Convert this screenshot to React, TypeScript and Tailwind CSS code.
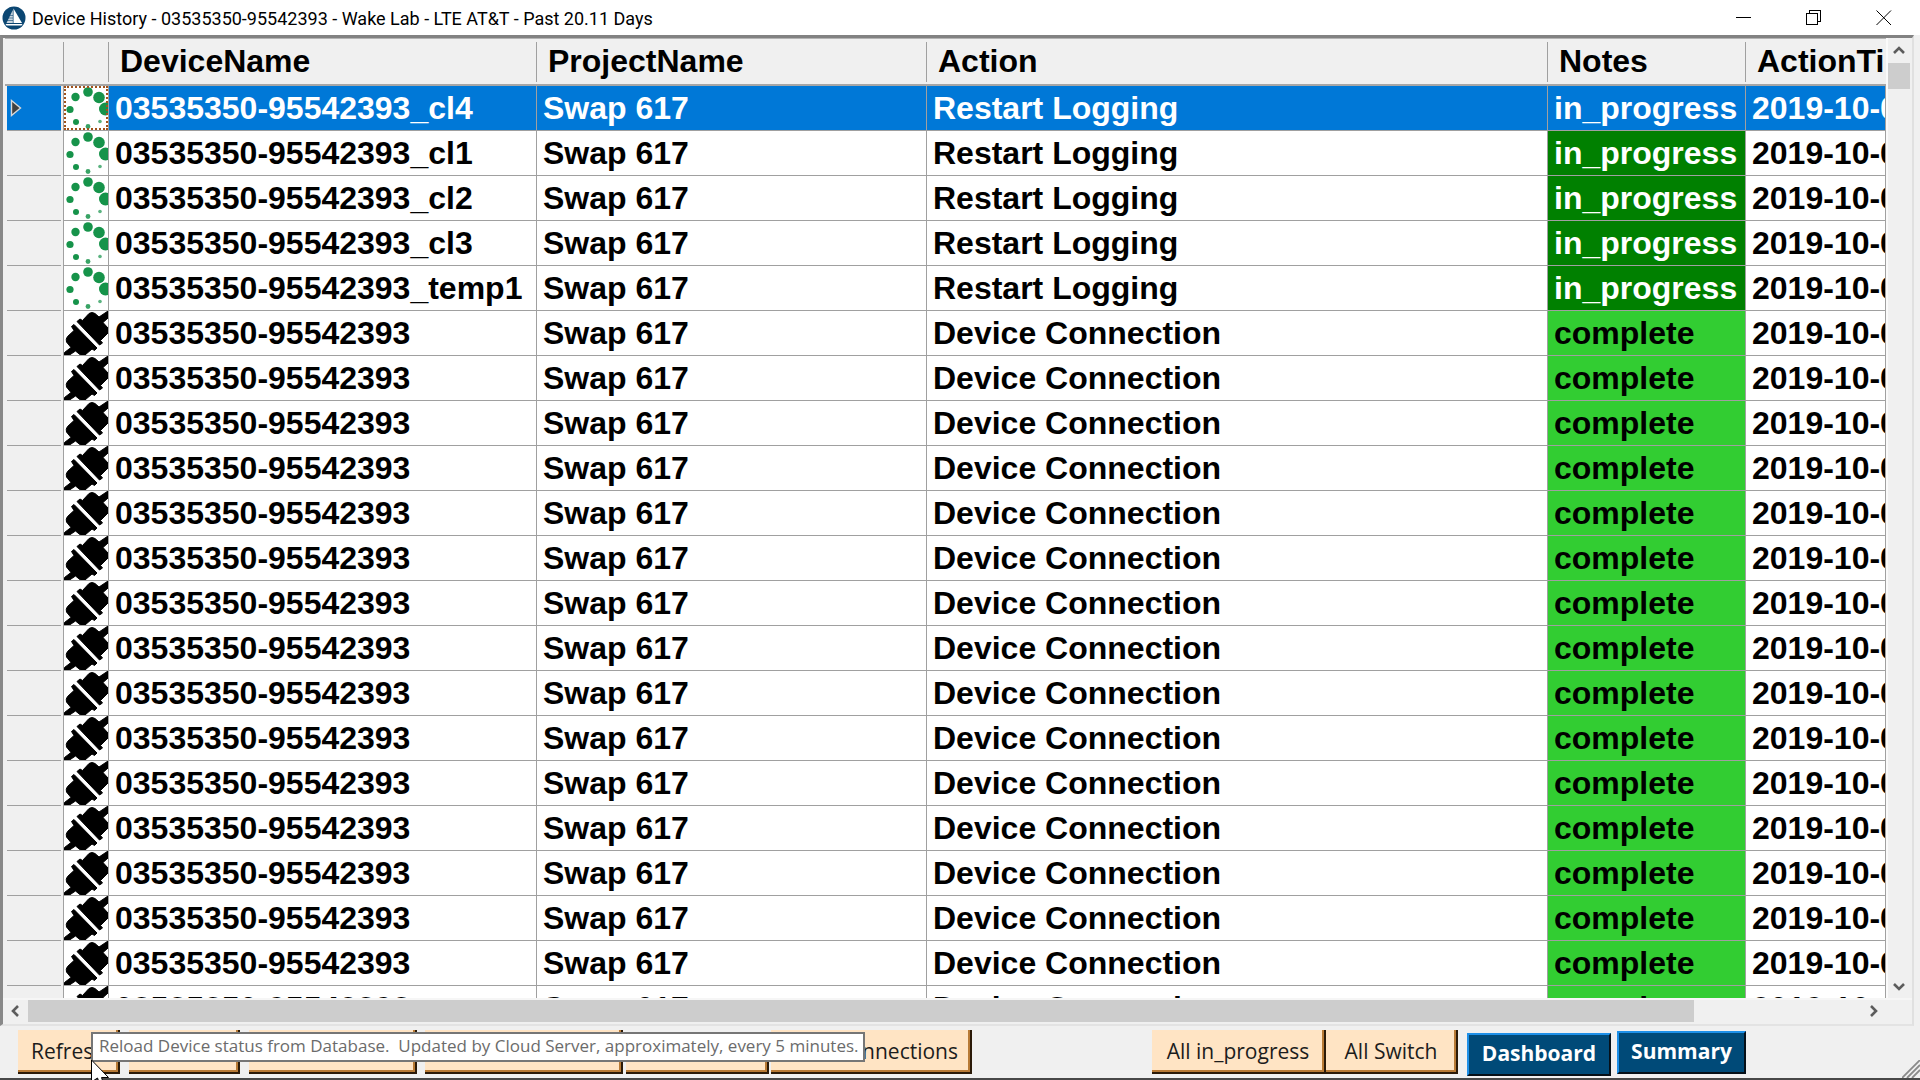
import React from 'react';

type RowData = {
  icon: 'busy' | 'plug';
  device: string;
  project: string;
  action: string;
  notes: 'in_progress' | 'complete';
  time: string;
};

const busyRows: RowData[] = ['cl4', 'cl1', 'cl2', 'cl3', 'temp1'].map((s) => ({
  icon: 'busy',
  device: `03535350-95542393_${s}`,
  project: 'Swap 617',
  action: 'Restart Logging',
  notes: 'in_progress',
  time: '2019-10-07',
}));

const doneRows: RowData[] = Array.from({ length: 16 }, () => ({
  icon: 'plug',
  device: '03535350-95542393',
  project: 'Swap 617',
  action: 'Device Connection',
  notes: 'complete',
  time: '2019-10-07',
}));

const rows = [...busyRows, ...doneRows];

function BusyIcon() {
  return (
    <svg viewBox="0 0 44 44" className="block size-11" fill="#16934a" aria-hidden="true">
      <circle cx="24" cy="6" r="4.8" />
      <circle cx="11.5" cy="11" r="4.2" />
      <circle cx="35" cy="11.5" r="5.8" />
      <circle cx="6" cy="23.5" r="3.6" />
      <circle cx="41.5" cy="23" r="6.5" />
      <circle cx="12" cy="36" r="3" />
      <circle cx="36" cy="35.5" r="1.8" opacity="0.7" />
      <circle cx="24" cy="40.5" r="2.4" opacity="0.85" />
    </svg>
  );
}

function PlugIcon() {
  return (
    <svg viewBox="0 0 44 44" className="block size-11" fill="#000" stroke="#000" strokeWidth="1" strokeLinejoin="round" aria-hidden="true">
      <path d="M13 10.5 L16 8 L18.5 9.5 L25 2.5 Q28 0.5 31 2.5 L35 6 L44 0 L44 7 L39 11.5 L44 17 L44 22 L36.5 29.5 L38.5 32 L35.5 34 Z" />
      <path d="M7.5 15.5 L10 13.5 L33 37 L30.5 39.5 L28 38 L21 44 L16.5 44 L11.5 40 L5.5 44 L0.5 44 L0.5 41.5 L7 36.5 L2.5 31 Q1.5 28 3.5 25.5 L10 19.5 Z" />
    </svg>
  );
}

function HeaderCell({ children, last = false }: { children?: React.ReactNode; last?: boolean }) {
  return (
    <th scope="col" className="h-[47px] overflow-hidden border-b-2 border-[#a6a6a6] p-0 text-left font-bold">
      <div className={last ? 'h-10 pl-[11px] leading-[38px]' : 'h-10 border-r border-[#a0a0a0] pl-[11px] leading-[38px]'}>{children}</div>
    </th>
  );
}

function Row({ row, selected }: { row: RowData; selected: boolean }) {
  const cell = 'h-[45px] overflow-hidden border-r border-b border-[#a0a0a0] py-0 pr-0 pl-1.5 leading-8';
  const note = selected ? '' : row.notes === 'in_progress' ? ' bg-[#008000] text-white' : ' bg-[#32cd32]';
  return (
    <tr className={selected ? 'bg-[#0078d7] text-white' : 'bg-white text-black'}>
      <th scope="row" aria-label={row.device} className="h-[45px] border-r border-[#a0a0a0] bg-[#f0f0f0] py-0 pr-0.5 pl-0.5">
        <div className={selected ? 'flex h-[45px] items-center border-b border-[#a0a0a0] bg-[#0078d7]' : 'h-[45px] border-b border-[#a0a0a0]'}>
          {selected && (
            <svg viewBox="0 0 12 18" className="ml-[3px] h-[18px] w-3" aria-hidden="true">
              <path d="M1.5 1.5 L10.5 9 L1.5 16.5 Z" fill="#404040" stroke="#d8d8d8" strokeWidth="1.4" />
            </svg>
          )}
        </div>
      </th>
      <td className="h-[45px] overflow-hidden border-r border-b border-[#a0a0a0] bg-white p-0">
        <div className={selected ? 'size-11 outline-2 -outline-offset-2 outline-dotted outline-[#a0521c]' : 'size-11'}>
          {row.icon === 'busy' ? <BusyIcon /> : <PlugIcon />}
        </div>
      </td>
      <td className={cell}>{row.device}</td>
      <td className={cell}>{row.project}</td>
      <td className={cell}>{row.action}</td>
      <td className={cell + note}>{row.notes}</td>
      <td className={cell}>{row.time}</td>
    </tr>
  );
}

function Chevron({ dir }: { dir: 'up' | 'down' | 'left' | 'right' }) {
  const d = {
    up: 'M2 9 L7 4 L12 9',
    down: 'M2 5 L7 10 L12 5',
    left: 'M9 2 L4 7 L9 12',
    right: 'M5 2 L10 7 L5 12',
  }[dir];
  return (
    <svg viewBox="0 0 14 14" className="size-3.5" fill="none" stroke="#5c5c5c" strokeWidth="2.6" aria-hidden="true">
      <path d={d} />
    </svg>
  );
}

function PeachButton({ className, label, children }: { className: string; label?: string; children?: React.ReactNode }) {
  return (
    <button
      type="button"
      aria-label={label}
      className={
        'shrink-0 overflow-hidden border-r-2 border-b-2 border-[#2b1a08] bg-[#ffe4c4] text-[21px] leading-10 whitespace-nowrap text-[#1c1c1c] shadow-[inset_-2px_-2px_0_#b87a35] ' +
        className
      }
    >
      {children}
    </button>
  );
}

function BlueButton({ className, children }: { className: string; children: React.ReactNode }) {
  return (
    <button
      type="button"
      className={
        'h-[43px] shrink-0 border-2 border-t-[#1e90e8] border-r-[#061018] border-b-[#061018] border-l-[#1e90e8] bg-[#004a78] pb-1 text-[21px] leading-8 font-bold text-white ' +
        className
      }
    >
      {children}
    </button>
  );
}

export default function App() {
  return (
    <div className="flex h-screen flex-col overflow-hidden bg-[#f0f0f0] font-['Open_Sans','Noto_Sans',sans-serif] text-black">
      <header className="flex h-[35px] shrink-0 items-center bg-white">
        <svg viewBox="0 0 24 24" className="ml-0.5 size-6 shrink-0" aria-hidden="true">
          <circle cx="12" cy="12" r="11.5" fill="#0b4672" />
          <path d="M11.5 2.5 L20 17 H11.5 Z" fill="#fff" />
          <path d="M10.8 4 V17 H4.5 Z" fill="#c9d4de" />
          <path d="M7 9.5 H11 M6 12 H11 M5 14.5 H11" stroke="#0b4672" strokeWidth="0.6" />
          <path d="M3.5 18 H20.5 L19.5 19.5 H4.5 Z" fill="#fff" />
        </svg>
        <h1 className="ml-1.5 flex-1 pt-0.5 font-['Roboto','Open_Sans',sans-serif] text-[18px] leading-8 whitespace-pre">Device History - 03535350-95542393 - Wake Lab - LTE AT&amp;T - Past 20.11 Days</h1>
        <div className="flex h-full pr-px">
          <button type="button" aria-label="Minimize" className="flex w-[70px] items-center justify-center">
            <svg viewBox="0 0 16 16" className="size-4" stroke="#000" shapeRendering="crispEdges"><path d="M0 7.5 H15" /></svg>
          </button>
          <button type="button" aria-label="Restore" className="flex w-[70px] items-center justify-center">
            <svg viewBox="0 0 16 16" className="size-4" fill="none" stroke="#000" shapeRendering="crispEdges">
              <path d="M0.5 3.5 H11.5 V14.5 H0.5 Z M3.5 3 V0.5 H14.5 V11.5 H12" />
            </svg>
          </button>
          <button type="button" aria-label="Close" className="flex w-[70px] items-center justify-center">
            <svg viewBox="0 0 16 16" className="size-4" stroke="#000"><path d="M0.5 0.5 L15 15 M15 0.5 L0.5 15" /></svg>
          </button>
        </div>
      </header>

      <main className="mr-1.5 flex min-h-0 flex-1 flex-col border-t-3 border-r-2 border-b-2 border-l-3 border-t-[#828282] border-r-[#e0e0e0] border-b-[#e3e3e3] border-l-[#888888]">
        <div className="flex min-h-0 flex-1 pl-0.5">
          <div className="min-w-0 flex-1 overflow-hidden border-t border-[#b4b4b4] bg-white">
            <table className="w-full table-fixed border-separate border-spacing-0 font-['Liberation_Sans',Arial,sans-serif] text-[32px] font-bold whitespace-nowrap">
              <colgroup>
                <col className="w-[59px]" />
                <col className="w-[45px]" />
                <col className="w-[428px]" />
                <col className="w-[390px]" />
                <col />
                <col className="w-[198px]" />
                <col className="w-[140px]" />
              </colgroup>
              <thead className="bg-[#f0f0f0]">
                <tr>
                  <HeaderCell />
                  <HeaderCell />
                  <HeaderCell>DeviceName</HeaderCell>
                  <HeaderCell>ProjectName</HeaderCell>
                  <HeaderCell>Action</HeaderCell>
                  <HeaderCell>Notes</HeaderCell>
                  <HeaderCell last>ActionTime</HeaderCell>
                </tr>
              </thead>
              <tbody>
                {rows.map((row, i) => (
                  <Row key={i} row={row} selected={i === 0} />
                ))}
              </tbody>
            </table>
          </div>
          <div className="flex w-[26px] shrink-0 flex-col border-l-2 border-[#fafafa] pr-0.5">
            <button type="button" aria-label="Scroll up" className="flex h-[25px] items-center justify-center"><Chevron dir="up" /></button>
            <div className="h-[26px] bg-[#cdcdcd]" />
            <div className="flex-1" />
            <button type="button" aria-label="Scroll down" className="flex h-6 items-center justify-center"><Chevron dir="down" /></button>
          </div>
        </div>
        <div className="flex h-[26px] shrink-0 border-t-2 border-[#f6f6f6] pr-[25px] pb-0.5">
          <button type="button" aria-label="Scroll left" className="flex w-[25px] items-center justify-center"><Chevron dir="left" /></button>
          <div className="flex flex-1"><div className="w-[91%] bg-[#cdcdcd]" /></div>
          <button type="button" aria-label="Scroll right" className="flex w-7 items-center justify-center"><Chevron dir="right" /></button>
        </div>
      </main>

      <footer className="relative flex h-[54px] shrink-0 items-start border-b-2 border-[#484848] pt-1 pl-[18px]">
        <PeachButton className="h-11 w-[102px] pl-[13px] text-left">Refresh</PeachButton>
        <PeachButton className="ml-[9px] h-11 w-[111px]" label="Device action" />
        <PeachButton className="ml-[9px] h-11 w-[168px]" label="Project action" />
        <PeachButton className="ml-2 h-11 w-[198px]" label="History action" />
        <PeachButton className="mt-0.5 ml-[3px] h-[42px] w-[143px]" label="Status action" />
        <PeachButton className="ml-[2px] h-11 w-[201px] pr-3 text-right">Connections</PeachButton>
        <div className="flex-1" />
        <PeachButton className="h-11 w-[174px]">All in_progress</PeachButton>
        <PeachButton className="h-11 w-[132px]">All Switch</PeachButton>
        <BlueButton className="mt-[3px] ml-[9px] w-36">Dashboard</BlueButton>
        <BlueButton className="mt-px mr-[174px] ml-1.5 w-[129px]">Summary</BlueButton>

        <div role="tooltip" className="absolute top-1.5 left-[91px] h-[30px] border-2 border-[#767676] bg-white pr-1 pl-1.5 text-[17px] leading-6 whitespace-pre text-[#6b6b6b]">
          Reload Device status from Database.  Updated by Cloud Server, approximately, every 5 minutes.
        </div>
        <svg viewBox="0 0 18 20" className="absolute -bottom-0.5 left-[91px] h-5 w-[18px]" aria-hidden="true">
          <path d="M0.5 0 L17.5 17.5 L10.5 17.5 L12 22 L8 22 L6.5 18 L0.5 22 Z" fill="#fff" stroke="#000" />
        </svg>
        <svg viewBox="0 0 18 18" className="absolute right-0 bottom-0 size-[18px]" stroke="#8a8a8a" strokeWidth="1.8" aria-hidden="true">
          <path d="M0 18 L18 0 M5 18 L18 5 M10 18 L18 10" />
        </svg>
      </footer>
    </div>
  );
}
